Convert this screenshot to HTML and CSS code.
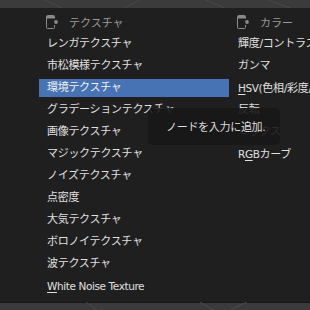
FILE: index.html
```html
<!DOCTYPE html>
<html lang="ja">
<head>
<meta charset="utf-8">
<link rel="stylesheet" href="styles.css">
</head>
<body>
<div class="strip strip-top">
  <svg width="310" height="8" viewBox="0 0 310 8"><g stroke="#4a4a4a" stroke-width="1" fill="none"><path d="M44 0 L62 8"/><path d="M125 8 L140 0"/><path d="M205 0 L225 8"/><path d="M268 0 L290 8"/></g></svg>
</div>
<div class="menu">
  <div class="col">
    <div class="hdr">
      <svg class="ico" width="14" height="16" viewBox="0 0 14 16"><path d="M9.5 4.5 V2.5 Q9.5 1.5 8.5 1.5 H2.5 Q1.5 1.5 1.5 2.5 V13.5 Q1.5 14.5 2.5 14.5 H8.5 Q9.5 14.5 9.5 13.5 V11" stroke="#8a8a8a" fill="none"/><rect x="2" y="2" width="7" height="2.5" fill="#8a8a8a"/><circle cx="11" cy="8" r="1.9" fill="#8a8a8a"/></svg>
      <span>テクスチャ</span>
    </div>
    <div class="item">レンガテクスチャ</div>
    <div class="item">市松模様テクスチャ</div>
    <div class="item active">環境テクスチャ</div>
    <div class="item">グラデーションテクスチャ</div>
    <div class="item">画像テクスチャ</div>
    <div class="item">マジックテクスチャ</div>
    <div class="item">ノイズテクスチャ</div>
    <div class="item">点密度</div>
    <div class="item">大気テクスチャ</div>
    <div class="item">ボロノイテクスチャ</div>
    <div class="item">波テクスチャ</div>
    <div class="item"><span class="lat"><u>W</u>hite Noise Texture</span></div>
  </div>
  <div class="col">
    <div class="hdr">
      <svg class="ico" width="14" height="16" viewBox="0 0 14 16"><path d="M9.5 4.5 V2.5 Q9.5 1.5 8.5 1.5 H2.5 Q1.5 1.5 1.5 2.5 V13.5 Q1.5 14.5 2.5 14.5 H8.5 Q9.5 14.5 9.5 13.5 V11" stroke="#8a8a8a" fill="none"/><rect x="2" y="2" width="7" height="2.5" fill="#8a8a8a"/><circle cx="11" cy="8" r="1.9" fill="#8a8a8a"/></svg>
      <span>カラー</span>
    </div>
    <div class="item">輝度/コントラスト</div>
    <div class="item">ガンマ</div>
    <div class="item"><span class="lat"><u>H</u>SV(</span>色相/彩度/明度)</div>
    <div class="item">反転</div>
    <div class="item">ミックス</div>
    <div class="item"><span class="lat">R<u>G</u>B</span>カーブ</div>
  </div>
</div>
<div class="strip strip-bottom">
  <svg width="310" height="8" viewBox="0 0 310 8"><g stroke="#4c4c4c" stroke-width="1" fill="none"><path d="M86 0 L97 8"/><path d="M200 0 L213 8"/><path d="M247 0 L230 8"/></g></svg>
</div>
<div class="tooltip">ノードを入力に追加.</div>
</body>
</html>
```
FILE: styles.css
```css
html, body {
  margin: 0;
  padding: 0;
  width: 310px;
  height: 310px;
  overflow: hidden;
  background: #1f1f1f;
  font-family: "DejaVu Sans", "Noto Sans CJK JP", sans-serif;
  font-size: 11px;
  color: #e0e0e0;
  position: relative;
}
.strip {
  height: 8px;
  background: #3b3b3b;
  overflow: hidden;
}
.strip svg { display: block; }
.strip-bottom { box-shadow: inset 0 1px 0 #151515; }
.menu {
  height: 294px;
  display: flex;
  padding-left: 39px;
  padding-top: 3px;
  box-sizing: border-box;
  overflow: hidden;
}
.col {
  width: 191px;
  flex: none;
  display: flex;
  flex-direction: column;
}
.hdr {
  height: 22px;
  display: flex;
  align-items: center;
  padding-left: 6px;
  color: #9a9a9a;
  white-space: nowrap;
}
.hdr .ico { margin-right: 10px; flex: none; }
.item {
  height: 18px;
  margin: 2px 1px 2px 0;
  line-height: 18px;
  padding-left: 8px;
  white-space: nowrap;
  letter-spacing: -0.3px;
}
.lat {
  font-size: 10.5px;
  letter-spacing: -0.4px;
}
.item u {
  text-decoration-color: #e0e0e0;
  text-underline-offset: 2px;
}
.item.active {
  background: #4772b3;
  color: #f2f2f2;
}
.tooltip {
  position: absolute;
  left: 148px;
  top: 108px;
  width: 132px;
  height: 37px;
  box-sizing: border-box;
  padding-left: 18px;
  padding-top: 4px;
  line-height: 31px;
  background: rgba(23, 23, 23, 0.9);
  border-radius: 5px;
  color: #dedede;
  white-space: nowrap;
  letter-spacing: -0.3px;
}
```
